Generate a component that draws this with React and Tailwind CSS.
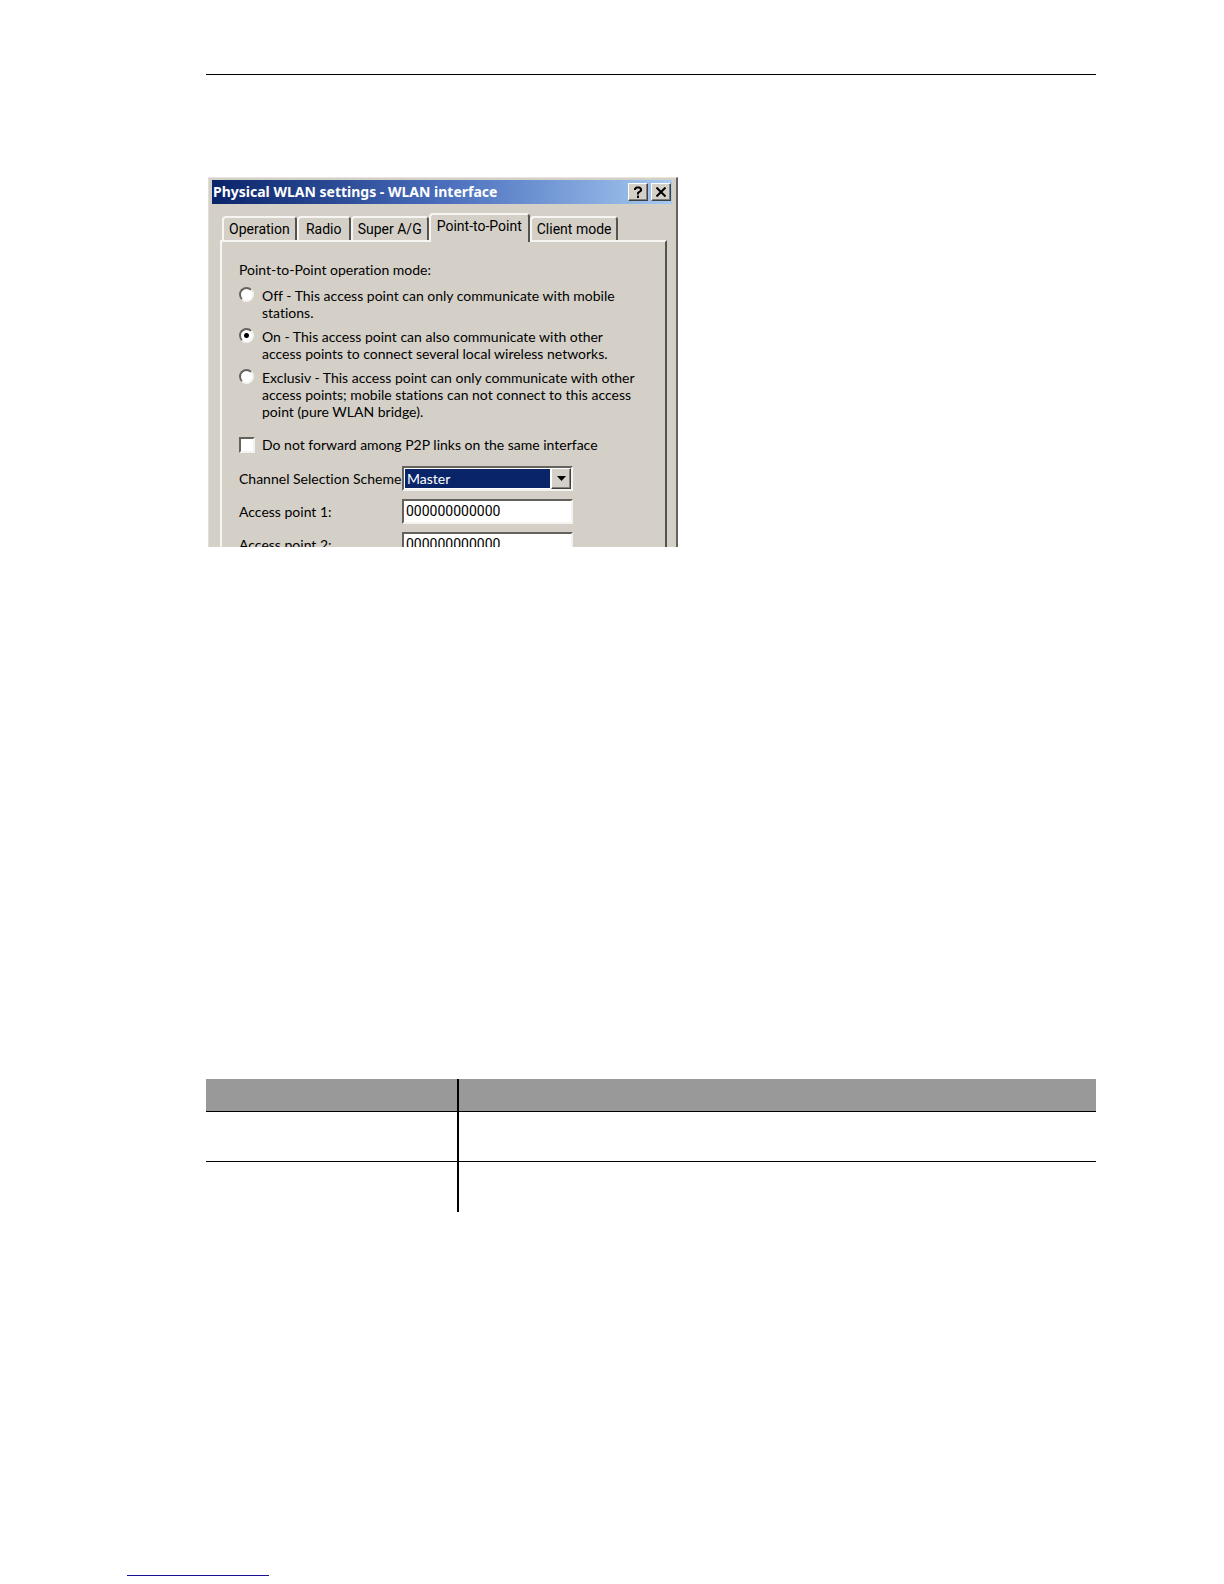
import { useState } from 'react';

const tabs = ['Operation', 'Radio', 'Super A/G', 'Point-to-Point', 'Client mode'];

const modes = [
  { id: 'off', lines: ['Off - This access point can only communicate with mobile', 'stations.'] },
  {
    id: 'on',
    lines: [
      'On - This access point can also communicate with other',
      'access points to connect several local wireless networks.',
    ],
  },
  {
    id: 'exclusive',
    lines: [
      'Exclusiv - This access point can only communicate with other',
      'access points; mobile stations can not connect to this access',
      'point (pure WLAN bridge).',
    ],
  },
];

const raised = 'border border-t-white border-l-white border-r-[#404040] border-b-[#404040] shadow-[inset_-1px_-1px_0_#808080]';
const sunken = 'border-2 border-t-[#65625d] border-l-[#65625d] border-r-[#f4f3ef] border-b-[#f4f3ef]';

function TitleBar() {
  return (
    <div className="flex h-6 shrink-0 items-center bg-linear-to-r from-[#0a246a] via-[#4a6dbc] to-[#a6caf0] pr-px pl-px">
      <h1 className="flex-1 font-[Noto_Sans,sans-serif] text-sm font-bold whitespace-nowrap text-white">
        Physical WLAN settings - WLAN interface
      </h1>
      <div className="flex gap-[3px]">
        <button type="button" aria-label="Help" className={`flex h-[18px] w-5 items-center justify-center bg-[#d4d0c8] ${raised}`}>
          <svg viewBox="0 0 10 12" className="h-3 w-2.5" fill="none" stroke="#000" strokeWidth="2">
            <path d="M2 4V3L3.5 1.5H6.5L8 3V4.5L5 7V8.5M5 9.5V12" />
          </svg>
        </button>
        <button type="button" aria-label="Close" className={`flex h-[18px] w-5 items-center justify-center bg-[#d4d0c8] ${raised}`}>
          <svg viewBox="0 0 10 10" className="size-2.5" stroke="#000" strokeWidth="2">
            <path d="M0.5 0.5L9.5 9.5M9.5 0.5L0.5 9.5" />
          </svg>
        </button>
      </div>
    </div>
  );
}

function Tabs({ active, onChange }) {
  return (
    <div role="tablist" className="flex h-[27px] items-end pl-0.5 font-[Roboto,sans-serif]">
      {tabs.map((tab) => (
        <button
          key={tab}
          type="button"
          role="tab"
          aria-selected={tab === active}
          onClick={() => onChange(tab)}
          className={`min-w-[54px] rounded-t-sm border-t-2 border-r-2 border-l-2 border-t-[#f6f5f1] border-r-[#55534e] border-l-[#f6f5f1] whitespace-nowrap ${
            tab === active ? 'relative -mb-0.5 h-[29px] bg-[#d4d0c8] px-1.5 pb-1' : 'h-6 px-[5px]'
          }`}
        >
          {tab}
        </button>
      ))}
    </div>
  );
}

function AccessPoint({ number }) {
  const id = `access-point-${number}`;
  return (
    <div className="flex h-[25px] items-center">
      <label htmlFor={id} className="w-[163px] shrink-0">
        Access point {number}:
      </label>
      <input
        id={id}
        type="text"
        defaultValue="000000000000"
        className={`h-[25px] w-[171px] bg-white px-0.5 pb-0.5 font-[Roboto,sans-serif] outline-none ${sunken}`}
      />
    </div>
  );
}

function SettingsDialog() {
  const [tab, setTab] = useState('Point-to-Point');
  const [mode, setMode] = useState('on');

  return (
    <section className="h-[370px] w-[470px] max-w-full overflow-hidden border-t border-r-2 border-l border-t-[#e8e6e0] border-r-[#65625d] border-l-[#e2dfd8] bg-[#d4d0c8] pt-0.5 pr-1 pl-[3px] font-[Lato,sans-serif] text-sm leading-[17px] text-black [font-variant-ligatures:none]">
      <TitleBar />
      <div className="pt-[9px] pr-[5px] pl-2">
        <Tabs active={tab} onChange={setTab} />
        <div className="h-96 border-t-2 border-r-2 border-l-2 border-t-[#f6f5f1] border-r-[#55534e] border-l-[#f6f5f1] pt-[19px] pl-[17px]">
          <fieldset>
            <legend className="mb-[9px]">Point-to-Point operation mode:</legend>
            <div className="flex flex-col gap-[7px]">
              {modes.map(({ id, lines }) => (
                <label key={id} className="flex gap-2">
                  <input
                    type="radio"
                    name="mode"
                    checked={mode === id}
                    onChange={() => setMode(id)}
                    className={`size-[15px] shrink-0 appearance-none rounded-full bg-white checked:bg-[radial-gradient(circle,#000_2px,#fff_3px)] ${sunken}`}
                  />
                  <span className="whitespace-nowrap">
                    {lines.map((line) => (
                      <span key={line} className="block">
                        {line}
                      </span>
                    ))}
                  </span>
                </label>
              ))}
            </div>
          </fieldset>
          <label className="mt-4 flex items-center gap-[7px]">
            <input type="checkbox" className={`size-4 appearance-none bg-white checked:bg-[#404040] ${sunken}`} />
            Do not forward among P2P links on the same interface
          </label>
          <div className="mt-[13px] flex flex-col gap-2">
            <div className="flex h-[25px] items-center">
              <label htmlFor="scheme" className="w-[163px] shrink-0 whitespace-nowrap">
                Channel Selection Scheme
              </label>
              <div className={`flex h-[25px] w-[171px] bg-white ${sunken}`}>
                <select id="scheme" className="m-px min-w-0 flex-1 appearance-none bg-[#0a246a] pl-0.5 text-white outline-none">
                  <option>Master</option>
                </select>
                <span className={`flex w-5 items-center justify-center bg-[#d4d0c8] ${raised}`}>
                  <svg viewBox="0 0 9 5" className="h-[5px] w-[9px]">
                    <path d="M0 0H9L4.5 5Z" />
                  </svg>
                </span>
              </div>
            </div>
            <AccessPoint number={1} />
            <AccessPoint number={2} />
          </div>
        </div>
      </div>
    </section>
  );
}

export default function App() {
  return (
    <div className="flex min-h-screen flex-col bg-white pt-[74px] pr-32 pl-[127px]">
      <main className="pl-[79px]">
        <hr className="border-t border-black" />
        <div className="mt-[102px] pl-0.5">
          <SettingsDialog />
        </div>
        <table className="mt-[532px] w-full table-fixed border-separate border-spacing-0">
          <thead>
            <tr className="bg-[#999]">
              <th className="h-[33px] w-[251px] border-b border-black" />
              <th className="border-b border-l-2 border-black" />
            </tr>
          </thead>
          <tbody>
            <tr>
              <td className="h-[50px] border-b border-black" />
              <td className="border-b border-l-2 border-black" />
            </tr>
            <tr>
              <td className="h-[50px]" />
              <td className="border-l-2 border-black" />
            </tr>
          </tbody>
        </table>
      </main>
      <footer className="mt-auto pb-2">
        <a href="#top" aria-label="Back to top" className="block h-4 w-[142px] border-b border-[#1a1090]" />
      </footer>
    </div>
  );
}
